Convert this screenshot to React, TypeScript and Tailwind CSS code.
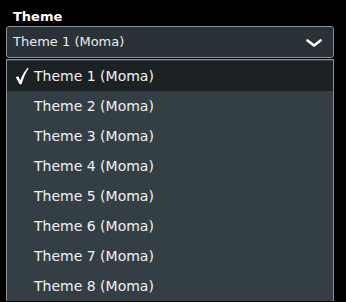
const themes = [1, 2, 3, 4, 5, 6, 7, 8]

function Chevron() {
  return (
    <svg width="16" height="9" viewBox="0 0 16 9" fill="none" className="mt-[2px]">
      <path d="M1.5 1.5 L8 6.5 L14.5 1.5" stroke="white" strokeWidth="2.6" strokeLinecap="round" strokeLinejoin="round" />
    </svg>
  )
}

function Check() {
  return (
    <svg width="14" height="18" viewBox="0 0 14 18">
      <path d="M0.8 10.2 L3.2 9.2 L5.4 13.4 C7 8.6 9.4 4.4 12.8 0.6 L13.6 1.4 C10.6 5.6 8.4 10.8 6.6 17.2 L4.6 17.2 Z" fill="white" />
    </svg>
  )
}

export default function App() {
  return (
    <div className="h-[302px] w-[346px] overflow-hidden bg-black pt-[9px] font-['DejaVu_Sans',Verdana,sans-serif]">
      <div className="pl-[13px] text-[13px] font-bold leading-4 text-white">Theme</div>
      <div className="mx-[6px] mt-[1px] w-[328px]">
        <div className="flex h-[32px] items-center justify-between rounded-[3px] border border-[#8a9399] bg-[#2a3237] pl-[6px] pr-[11px] text-[13px] text-[#e8eaeb]">
          <span>Theme 1 (Moma)</span>
          <Chevron />
        </div>
        <ul className="mt-[1px] border-x border-t border-[#8a9399] bg-[#343e45] pt-[1px]">
          {themes.map((n) => (
            <li
              key={n}
              className={`flex h-[30px] items-center text-[14px] text-[#f0f2f3] ${n === 1 ? "bg-[#1c2124]" : ""}`}
            >
              <span className="flex w-[27px] pl-[8px]">{n === 1 ? <Check /> : null}</span>
              <span>Theme {n} (Moma)</span>
            </li>
          ))}
        </ul>
      </div>
    </div>
  )
}
